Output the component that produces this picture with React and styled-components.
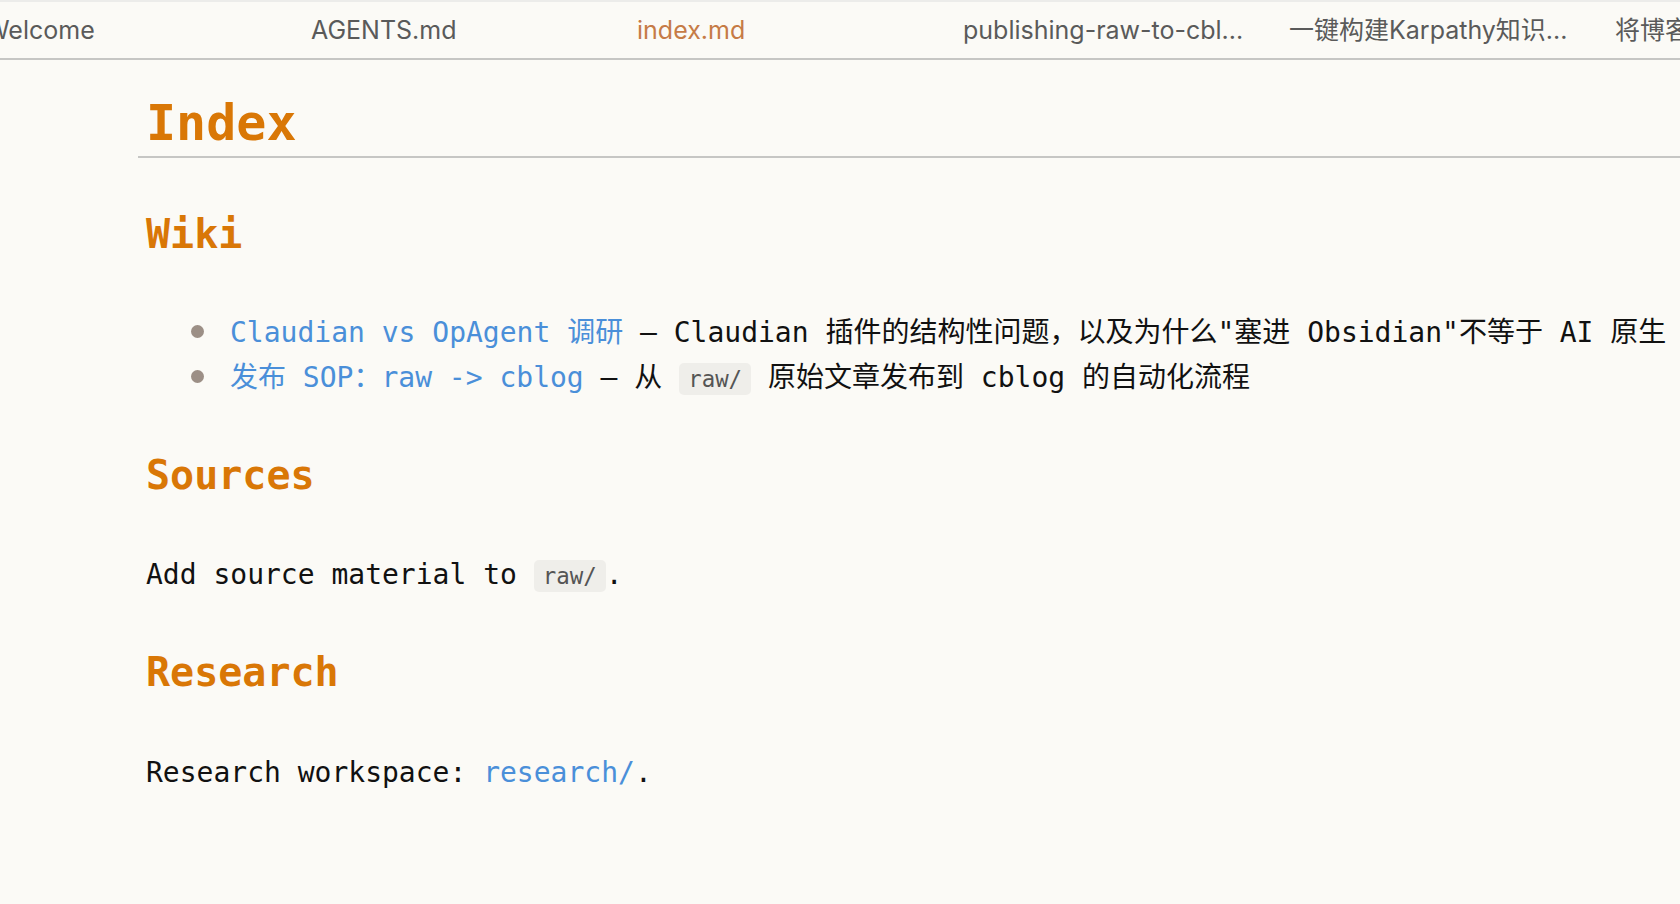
import styled, { createGlobalStyle } from 'styled-components'

const Global = createGlobalStyle`
    html, body {
        margin : 0;
        padding : 0;
        background : #fbfaf6;
        overflow : hidden;
    }
    #root {
        width : 1680px;
        height : 904px;
        overflow : hidden;
    }
`

const Page = styled.div`
    width : 1680px;
    height : 904px;
    background : #fbfaf6;
    display : flex;
    flex-direction : column;
    overflow : hidden;
`

const TabBar = styled.div`
    height : 56px;
    border-top : 2px solid #ececea;
    border-bottom : 2px solid #c6c6c4;
    overflow : hidden;
    flex-shrink : 0;
`

const TabStrip = styled.div`
    display : flex;
    margin-left : -33px;
`

const Tab = styled.div`
    flex : 0 0 326px;
    box-sizing : border-box;
    height : 56px;
    padding : 0 18px;
    font-family : Inter, "Noto Sans CJK SC", sans-serif;
    font-size : 25px;
    line-height : 56px;
    color : ${p => (p.$active ? '#c67b46' : '#5a5a5a')};
    white-space : nowrap;
    overflow : hidden;
`

const Content = styled.div`
    padding-left : 146px;
    font-family : "DejaVu Sans Mono", "Noto Sans CJK SC", monospace;
    font-size : 28px;
    line-height : 1.5;
    color : #111;
`

const H1 = styled.h1`
    margin : 33px 0 0 -8px;
    padding : 0 0 3px 8px;
    font-size : 50px;
    line-height : 1.2;
    font-weight : bold;
    color : #d97706;
    border-bottom : 2px solid #c6c6c4;
`

const H2 = styled.h2`
    margin : ${p => p.$top}px 0 ${p => p.$bottom}px;
    font-size : 40px;
    line-height : 1.2;
    font-weight : bold;
    color : #d97706;
`

const List = styled.ul`
    margin : 0;
    padding : 0 0 0 84px;
    list-style : none;
`

const Item = styled.li`
    position : relative;
    white-space : nowrap;

    & + & {
        margin-top : 3px;
    }

    &::before {
        content : '';
        position : absolute;
        left : -39px;
        top : 13px;
        width : 13px;
        height : 13px;
        border-radius : 50%;
        background : #9c8f86;
    }
`

const Para = styled.p`
    margin : 0;
    white-space : nowrap;
`

const Link = styled.a`
    color : #4a8fd9;
    text-decoration : none;
`

const Code = styled.code`
    font-family : "DejaVu Sans Mono", monospace;
    font-size : 22.4px;
    color : #555;
    background : #efeeea;
    border-radius : 5px;
    padding : 3px 9px;
`

const tabs = [
    'Welcome',
    'AGENTS.md',
    'index.md',
    'publishing-raw-to-cbl...',
    '一键构建Karpathy知识...',
    '将博客',
]

export default function App() {
    return (
        <Page>
            <Global />
            <TabBar>
                <TabStrip>
                    {tabs.map(t => (
                        <Tab key={t} $active={t === 'index.md'}>{t}</Tab>
                    ))}
                </TabStrip>
            </TabBar>

            <Content>
                <H1>Index</H1>

                <H2 $top={52} $bottom={54}>Wiki</H2>
                <List>
                    <Item>
                        <Link>Claudian vs OpAgent 调研</Link> — Claudian 插件的结构性问题，以及为什么"塞进 Obsidian"不等于 AI 原生
                    </Item>
                    <Item>
                        <Link>发布 SOP：raw -&gt; cblog</Link> — 从 <Code>raw/</Code> 原始文章发布到 cblog 的自动化流程
                    </Item>
                </List>

                <H2 $top={52} $bottom={55}>Sources</H2>
                <Para>Add source material to <Code>raw/</Code>.</Para>

                <H2 $top={52} $bottom={56}>Research</H2>
                <Para>Research workspace: <Link>research/</Link>.</Para>
            </Content>
        </Page>
    )
}
